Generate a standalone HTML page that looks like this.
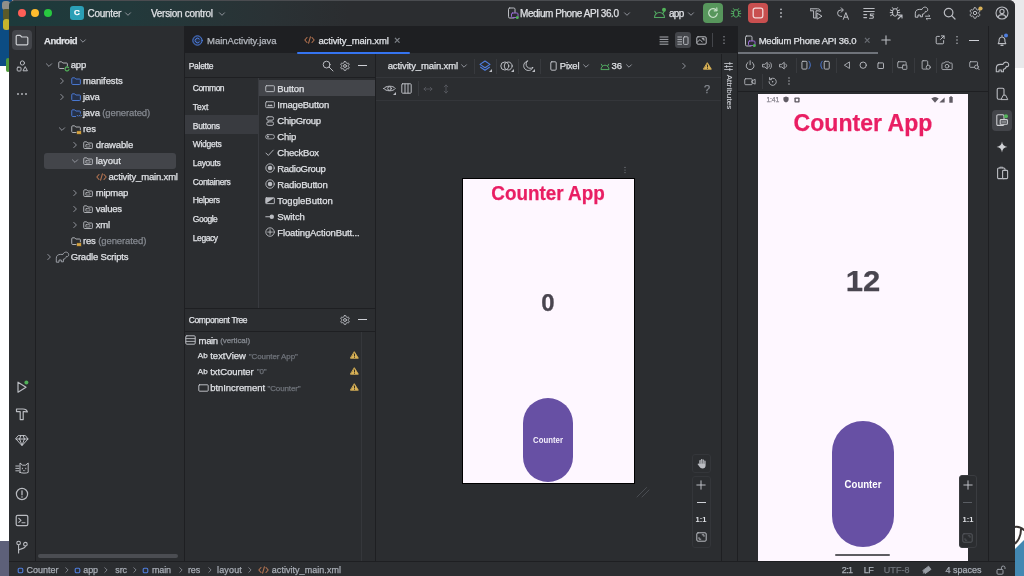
<!DOCTYPE html>
<html lang="en"><head><meta charset="utf-8"><title>Counter – activity_main.xml</title>
<style>
*{margin:0;padding:0;box-sizing:border-box}
html,body{width:1024px;height:576px;overflow:hidden;background:#fff}
body{position:relative;font-family:"Liberation Sans",sans-serif;font-size:9.5px;color:#dfe1e5}
#root{position:absolute;left:0;top:0;width:1024px;height:576px;will-change:transform}
.t{position:absolute;-webkit-text-stroke:0.25px;white-space:nowrap;line-height:16px;height:16px;display:block}
.r{position:absolute}
.i{position:absolute;overflow:visible;opacity:.88;fill:none;stroke:#ced0d6;stroke-width:1;stroke-linecap:round;stroke-linejoin:round}
#win{position:absolute;left:9px;top:0;width:1006px;height:576px;background:#2b2d30;border-radius:6px 6px 0 0;overflow:hidden}
</style></head>
<body>
<div id="root">
<div class="r" style="left:0px;top:0px;width:12px;height:66px;background:#0c4c83;"></div>
<div class="r" style="left:2px;top:1px;width:8px;height:9px;background:#8f8f8a;border-radius:3px"></div>
<div class="r" style="left:3px;top:9px;width:7px;height:11px;background:#5a5a2a;border-radius:2px"></div>
<div class="r" style="left:3px;top:19px;width:7px;height:11px;background:#c4b52e;border-radius:3px"></div>
<div class="r" style="left:6px;top:58px;width:4px;height:14px;background:#4f9a3a;border-radius:2px"></div>
<div class="r" style="left:0px;top:541px;width:12px;height:35px;background:#5d6079;"></div>
<div class="r" style="left:1012px;top:0px;width:12px;height:68px;background:#e9e9eb;"></div>
<svg class="i" style="left:1014px;top:520px" width="10" height="56" viewBox="0 0 10 56"><path d="M0 30 L10 20 V56 H0 Z" fill="#2a78a8" stroke="none"/><path d="M0 7 C4 6 7 7 10 10 M7 9 C7 16 4 22 0 24" stroke="#1f1a17" stroke-width="2"/></svg>
<div id="win"></div>
<div class="r" style="left:9px;top:0px;width:1006px;height:26px;background:linear-gradient(90deg,#1d3a3b 0px,#22393b 120px,#2a3235 260px,#2b2d30 340px);border-radius:6px 6px 0 0;border-top:1px solid #4a4c50"></div>
<div class="r" style="left:18px;top:9px;width:8px;height:8px;background:#fe5f57;border-radius:50%"></div>
<div class="r" style="left:31px;top:9px;width:8px;height:8px;background:#febc2e;border-radius:50%"></div>
<div class="r" style="left:44px;top:9px;width:8px;height:8px;background:#28c840;border-radius:50%"></div>
<div class="r" style="left:70px;top:6px;width:14px;height:14px;background:#2b9fb6;border-radius:3px"></div>
<span class="t" style="left:74px;top:5.35px;font-size:8px;color:#fff;font-weight:bold;">C</span>
<span class="t" style="left:87.6px;top:5.65px;font-size:10px;letter-spacing:-0.310px;">Counter</span>
<span class="t" style="left:151px;top:5.65px;font-size:10px;letter-spacing:-0.290px;">Version control</span>
<span class="t" style="left:520px;top:5.65px;font-size:10px;letter-spacing:-0.445px;">Medium Phone API 36.0</span>
<span class="t" style="left:669px;top:5.65px;font-size:10px;letter-spacing:-0.694px;">app</span>
<div class="r" style="left:703px;top:3px;width:20px;height:20px;background:#57965c;border-radius:4px"></div>
<div class="r" style="left:748px;top:3px;width:20px;height:20px;background:#c94f4f;border-radius:4px"></div>
<div class="r" style="left:185px;top:26px;width:553px;height:27px;background:#1e1f22;"></div>
<span class="t" style="left:207px;top:32.85px;color:#b4b8bf;letter-spacing:-0.032px;">MainActivity.java</span>
<span class="t" style="left:318.4px;top:32.85px;letter-spacing:-0.119px;">activity_main.xml</span>
<span class="t" style="left:394px;top:32.35px;font-size:11px;color:#868a91;">×</span>
<div class="r" style="left:297px;top:51.5px;width:112.5px;height:2.5px;background:#3574f0;border-radius:1.5px"></div>
<span class="t" style="left:758.7px;top:32.95px;letter-spacing:-0.231px;">Medium Phone API 36.0</span>
<span class="t" style="left:864px;top:32.35px;font-size:11px;color:#6f737a;">×</span>
<div class="r" style="left:738px;top:52px;width:140px;height:2px;background:#6f737a;"></div>
<div class="r" style="left:35px;top:26px;width:1px;height:535px;background:#1e1f22;"></div>
<div class="r" style="left:12px;top:30.2px;width:20px;height:19.8px;background:#43454a;border-radius:4px"></div>
<span class="t" style="left:44px;top:32.95px;font-weight:bold;letter-spacing:-0.458px;">Android</span>
<div class="r" style="left:44px;top:153.2px;width:132px;height:15.8px;background:#43454a;border-radius:3px"></div>
<span class="t" style="left:70.7px;top:57.30px;letter-spacing:-0.150px;">app</span>
<span class="t" style="left:82.9px;top:73.20px;letter-spacing:-0.095px;">manifests</span>
<span class="t" style="left:82.9px;top:89.20px;letter-spacing:-0.157px;">java</span>
<span class="t" style="left:82.9px;top:105.20px;letter-spacing:-0.130px;">java<span style="color:#868a91"> (generated)</span></span>
<span class="t" style="left:82.9px;top:121.20px;letter-spacing:-0.099px;">res</span>
<span class="t" style="left:95.8px;top:137.20px;letter-spacing:-0.156px;">drawable</span>
<span class="t" style="left:95.8px;top:153.20px;letter-spacing:-0.075px;">layout</span>
<span class="t" style="left:108.5px;top:169.20px;letter-spacing:-0.178px;">activity_main.xml</span>
<span class="t" style="left:95.8px;top:185.20px;letter-spacing:-0.264px;">mipmap</span>
<span class="t" style="left:95.8px;top:201.20px;letter-spacing:-0.260px;">values</span>
<span class="t" style="left:95.8px;top:217.20px;letter-spacing:-0.191px;">xml</span>
<span class="t" style="left:82.9px;top:233.20px;letter-spacing:-0.110px;">res<span style="color:#868a91"> (generated)</span></span>
<span class="t" style="left:70.7px;top:249.20px;letter-spacing:-0.185px;">Gradle Scripts</span>
<div class="r" style="left:184px;top:26px;width:1px;height:535px;background:#1e1f22;"></div>
<div class="r" style="left:38px;top:554px;width:140px;height:4px;background:#4b4d52;border-radius:2px"></div>
<span class="t" style="left:188.7px;top:57.85px;font-size:8.5px;letter-spacing:-0.280px;">Palette</span>
<div class="r" style="left:185px;top:77px;width:191px;height:1px;background:#1e1f22;"></div>
<div class="r" style="left:258px;top:78px;width:1px;height:230px;background:#393b40;"></div>
<div class="r" style="left:185px;top:115.4px;width:73px;height:18.2px;background:#393b40;"></div>
<span class="t" style="left:192.8px;top:80.15px;font-size:8.5px;letter-spacing:-0.547px;">Common</span>
<span class="t" style="left:192.8px;top:98.83px;font-size:8.5px;letter-spacing:0.028px;">Text</span>
<span class="t" style="left:192.8px;top:117.51px;font-size:8.5px;letter-spacing:-0.289px;">Buttons</span>
<span class="t" style="left:192.8px;top:136.19px;font-size:8.5px;letter-spacing:-0.301px;">Widgets</span>
<span class="t" style="left:192.8px;top:154.87px;font-size:8.5px;letter-spacing:-0.296px;">Layouts</span>
<span class="t" style="left:192.8px;top:173.55px;font-size:8.5px;letter-spacing:-0.350px;">Containers</span>
<span class="t" style="left:192.8px;top:192.23px;font-size:8.5px;letter-spacing:-0.355px;">Helpers</span>
<span class="t" style="left:192.8px;top:210.91px;font-size:8.5px;letter-spacing:-0.485px;">Google</span>
<span class="t" style="left:192.8px;top:229.59px;font-size:8.5px;letter-spacing:-0.435px;">Legacy</span>
<div class="r" style="left:259px;top:80px;width:116px;height:16px;background:#43454a;"></div>
<span class="t" style="left:277.3px;top:80.85px;letter-spacing:-0.094px;">Button</span>
<span class="t" style="left:277.3px;top:96.85px;letter-spacing:-0.197px;">ImageButton</span>
<span class="t" style="left:277.3px;top:112.85px;letter-spacing:-0.271px;">ChipGroup</span>
<span class="t" style="left:277.3px;top:128.85px;letter-spacing:-0.209px;">Chip</span>
<span class="t" style="left:277.3px;top:144.85px;letter-spacing:-0.225px;">CheckBox</span>
<span class="t" style="left:277.3px;top:160.85px;letter-spacing:-0.302px;">RadioGroup</span>
<span class="t" style="left:277.3px;top:176.85px;letter-spacing:-0.189px;">RadioButton</span>
<span class="t" style="left:277.3px;top:192.85px;letter-spacing:0.004px;">ToggleButton</span>
<span class="t" style="left:277.3px;top:208.85px;letter-spacing:-0.080px;">Switch</span>
<span class="t" style="left:277.3px;top:224.85px;letter-spacing:-0.129px;">FloatingActionButt...</span>
<div class="r" style="left:375px;top:54px;width:1px;height:507px;background:#1e1f22;"></div>
<div class="r" style="left:185px;top:307.5px;width:191px;height:1px;background:#1e1f22;"></div>
<span class="t" style="left:188.7px;top:311.95px;font-size:8.5px;letter-spacing:-0.344px;">Component Tree</span>
<div class="r" style="left:185px;top:331px;width:191px;height:1px;background:#1e1f22;"></div>
<div class="r" style="left:361px;top:332px;width:1px;height:229px;background:#35373b;"></div>
<span class="t" style="left:198.6px;top:332.55px;letter-spacing:-0.372px;">main</span>
<span class="t" style="left:220.2px;top:332.95px;font-size:8px;color:#868a91;letter-spacing:-0.087px;">(vertical)</span>
<span class="t" style="left:197.7px;top:348.15px;font-size:8px;letter-spacing:0.157px;">Ab</span>
<span class="t" style="left:210.25px;top:348.15px;letter-spacing:-0.016px;">textView</span>
<span class="t" style="left:248.7px;top:348.55px;font-size:8px;color:#6f737a;letter-spacing:-0.081px;">"Counter App"</span>
<span class="t" style="left:197.7px;top:364.05px;font-size:8px;letter-spacing:0.157px;">Ab</span>
<span class="t" style="left:210.25px;top:364.05px;letter-spacing:-0.032px;">txtCounter</span>
<span class="t" style="left:256.75px;top:364.45px;font-size:8px;color:#6f737a;letter-spacing:-0.126px;">"0"</span>
<span class="t" style="left:210.25px;top:380.35px;letter-spacing:-0.058px;">btnIncrement</span>
<span class="t" style="left:267.4px;top:380.75px;font-size:8px;color:#6f737a;letter-spacing:-0.104px;">"Counter"</span>
<span class="t" style="left:387.7px;top:58.35px;letter-spacing:-0.119px;">activity_main.xml</span>
<span class="t" style="left:559.8px;top:58.35px;letter-spacing:-0.218px;">Pixel</span>
<span class="t" style="left:611.5px;top:58.35px;letter-spacing:-0.033px;">36</span>
<span class="t" style="left:704px;top:81.35px;font-size:11px;color:#868a91;">?</span>
<div class="r" style="left:376px;top:77px;width:345px;height:1px;background:#34363a;"></div>
<div class="r" style="left:376px;top:100px;width:345px;height:1px;background:#34363a;"></div>
<div class="r" style="left:721px;top:54px;width:1px;height:507px;background:#1e1f22;"></div>
<div class="r" style="left:737px;top:26px;width:1px;height:535px;background:#1e1f22;"></div>
<span class="t" style="left:0px;top:-7.65px;font-size:8px;color:#ced0d6;letter-spacing:0.081px;left:721.2px;top:84.2px;transform:rotate(90deg);transform-origin:center;width:16px;text-align:center;overflow:visible;display:flex;justify-content:center;-webkit-text-stroke:0.1px;">Attributes</span>
<div class="r" style="left:461.5px;top:177.5px;width:173.5px;height:306px;background:#fef7ff;border:1px solid #000"></div>
<span class="t" style="left:548.1px;top:180.95px;font-size:19.6px;color:#e91e63;font-weight:bold;line-height:24px;height:24px;transform:translateX(-50%) scaleX(0.962);">Counter App</span>
<span class="t" style="left:548px;top:288.85px;font-size:24px;color:#49454f;font-weight:bold;line-height:28px;height:28px;transform:translateX(-50%);">0</span>
<div class="r" style="left:522.8px;top:397.8px;width:50.6px;height:84px;background:#6750a4;border-radius:25.3px"></div>
<span class="t" style="left:547.7px;top:433.35px;font-size:8.2px;color:#f3eefb;font-weight:bold;transform:translateX(-50%) scaleX(0.95);-webkit-text-stroke:0;">Counter</span>
<div class="r" style="left:691.5px;top:453.5px;width:19px;height:19px;background:#2b2d30;border:1px solid #34363a;border-radius:3px"></div>
<div class="r" style="left:691.5px;top:476px;width:19px;height:71.5px;background:#2b2d30;border:1px solid #34363a;border-radius:3px"></div>
<span class="t" style="left:701px;top:512.05px;font-size:7.5px;font-weight:bold;transform:translateX(-50%);-webkit-text-stroke:0;">1:1</span>
<div class="r" style="left:757.7px;top:93.5px;width:210.3px;height:467px;background:#fef7ff;"></div>
<span class="t" style="left:766.5px;top:92.15px;font-size:6.8px;color:#8a8690;letter-spacing:-0.158px;">1:41</span>
<span class="t" style="left:862.9px;top:108.15px;font-size:24.8px;color:#e91e63;font-weight:bold;line-height:30px;height:30px;transform:translateX(-50%) scaleX(0.93);">Counter App</span>
<span class="t" style="left:863.4px;top:263.75px;font-size:29px;color:#49454f;font-weight:bold;line-height:34px;height:34px;transform:translateX(-50%) scaleX(1.07);">12</span>
<div class="r" style="left:831.7px;top:420.8px;width:62.1px;height:126px;background:#6750a4;border-radius:31px"></div>
<span class="t" style="left:862.9px;top:477.35px;font-size:10px;color:#fff;font-weight:bold;transform:translateX(-50%) scaleX(0.96);-webkit-text-stroke:0;">Counter</span>
<div class="r" style="left:835.4px;top:553.5px;width:55px;height:2.5px;background:#5d5c61;border-radius:1.5px"></div>
<div class="r" style="left:958.5px;top:475px;width:18.5px;height:73px;background:#2b2d30;border:1px solid #3a3c40;border-radius:3px"></div>
<span class="t" style="left:968px;top:512.35px;font-size:7.5px;font-weight:bold;transform:translateX(-50%);-webkit-text-stroke:0;">1:1</span>
<div class="r" style="left:988px;top:26px;width:1px;height:535px;background:#1e1f22;"></div>
<div class="r" style="left:9px;top:561px;width:1006px;height:1px;background:#1e1f22;"></div>
<span class="t" style="left:26.4px;top:562.35px;font-size:9px;color:#a8adb5;letter-spacing:-0.002px;">Counter</span>
<span class="t" style="left:83.3px;top:562.35px;font-size:9px;color:#a8adb5;letter-spacing:-0.105px;">app</span>
<span class="t" style="left:115.3px;top:562.35px;font-size:9px;color:#a8adb5;letter-spacing:-0.099px;">src</span>
<span class="t" style="left:152px;top:562.35px;font-size:9px;color:#a8adb5;letter-spacing:-0.127px;">main</span>
<span class="t" style="left:188px;top:562.35px;font-size:9px;color:#a8adb5;letter-spacing:-0.167px;">res</span>
<span class="t" style="left:217px;top:562.35px;font-size:9px;color:#a8adb5;letter-spacing:0.164px;">layout</span>
<span class="t" style="left:271.8px;top:562.35px;font-size:9px;color:#a8adb5;letter-spacing:0.040px;">activity_main.xml</span>
<span class="t" style="left:841.8px;top:562.35px;font-size:9px;color:#a8adb5;letter-spacing:-0.603px;">2:1</span>
<span class="t" style="left:863.8px;top:562.35px;font-size:9px;color:#a8adb5;letter-spacing:-0.651px;">LF</span>
<span class="t" style="left:883.7px;top:562.35px;font-size:9px;color:#6f737a;letter-spacing:0.101px;">UTF-8</span>
<span class="t" style="left:945.4px;top:562.35px;font-size:9px;color:#a8adb5;letter-spacing:-0.002px;">4 spaces</span>
<svg class="i" style="left:124.00px;top:10.50px;" width="8.0" height="6.0" viewBox="0 0 8 6"><path d="M1.5 1.8 L4 4.3 L6.5 1.8" stroke="#9da0a8" stroke-width="1"/></svg>
<svg class="i" style="left:217.50px;top:10.50px;" width="8.0" height="6.0" viewBox="0 0 8 6"><path d="M1.5 1.8 L4 4.3 L6.5 1.8" stroke="#9da0a8" stroke-width="1"/></svg>
<svg class="i" style="left:623.00px;top:10.50px;" width="8.0" height="6.0" viewBox="0 0 8 6"><path d="M1.5 1.8 L4 4.3 L6.5 1.8" stroke="#9da0a8" stroke-width="1"/></svg>
<svg class="i" style="left:686.50px;top:10.50px;" width="8.0" height="6.0" viewBox="0 0 8 6"><path d="M1.5 1.8 L4 4.3 L6.5 1.8" stroke="#9da0a8" stroke-width="1"/></svg>
<svg class="i" style="left:507.00px;top:7.30px;" width="12.0" height="12.0" viewBox="0 0 12 12"><rect x="1.5" y="1" width="6.5" height="10" rx="1.2" stroke="#ced0d6"/><rect x="4.5" y="6" width="6.5" height="4.5" rx="1" fill="#2b2d30" stroke="#a571e6"/><circle cx="10.3" cy="10.6" r="1.5" fill="#57c55f" stroke="none"/></svg>
<svg class="i" style="left:653.00px;top:7.50px;" width="13.0" height="11.0" viewBox="0 0 13 11"><path d="M1.5 9.5 A5 5 0 0 1 11.5 9.5 Z M3.3 5.8 L1.8 3.3 M9.7 5.8 L11.2 3.3" stroke="#57b968" stroke-width="1.1"/><circle cx="11" cy="1.8" r="2" fill="#57c55f" stroke="none"/></svg>
<svg class="i" style="left:707.00px;top:7.00px;" width="12.0" height="12.0" viewBox="0 0 12 12"><path d="M9.6 3.6 A4.3 4.3 0 1 0 10.3 6.5" stroke="#d8ecd9" stroke-width="1.2"/><path d="M7.2 3.9 L10 3.6 L9.8 0.9" stroke="#d8ecd9" stroke-width="1.1"/></svg>
<svg class="i" style="left:729.50px;top:7.00px;" width="12.0" height="12.0" viewBox="0 0 12 12"><path d="M3.6 5.2 A2.4 2.6 0 0 1 8.4 5.2 V7.6 A2.4 2.6 0 0 1 3.6 7.6 Z M4.5 3 L3.4 1.6 M7.5 3 L8.6 1.6 M3.6 5 L1.4 4 M8.4 5 L10.6 4 M3.6 6.6 H1.2 M8.4 6.6 H10.8 M3.8 8.3 L1.6 9.6 M8.2 8.3 L10.4 9.6" stroke="#57b968" stroke-width="1"/></svg>
<svg class="i" style="left:752.20px;top:7.00px;" width="12.0" height="12.0" viewBox="0 0 12 12"><rect x="1.2" y="1.2" width="9.6" height="9.6" rx="2" stroke="#f7e9e9" stroke-width="1.3"/></svg>
<svg class="i" style="left:778.50px;top:7.00px;" width="4.0" height="12.0" viewBox="0 0 4 12"><g fill="#ced0d6" stroke="none"><circle cx="2" cy="2.3" r="0.9"/><circle cx="2" cy="6" r="0.9"/><circle cx="2" cy="9.7" r="0.9"/></g></svg>
<svg class="i" style="left:809.00px;top:6.50px;" width="14.0" height="13.0" viewBox="0 0 14 13"><path d="M1.5 1.8 H8.5 C10.5 1.8 11.5 3 11.8 4.3 L9 3.8 H7 V11 H4.6 V3.8 H1.5 Z" stroke="#ced0d6" stroke-width="1"/><path d="M8.3 6.3 L13 9.2 L8.3 12 Z" fill="#2b2d30" stroke="#ced0d6" stroke-width="1"/></svg>
<svg class="i" style="left:836.00px;top:6.50px;" width="14.0" height="13.0" viewBox="0 0 14 13"><path d="M6.5 3 H4.8 A3.2 3.2 0 1 0 4.8 9.4 H5.6" stroke="#ced0d6"/><path d="M5.2 0.8 L7.4 3 L5.2 5.2" stroke="#ced0d6"/><path d="M7.3 12.3 L9.9 5.6 L12.5 12.3 M8.2 10.2 H11.6" stroke="#ced0d6"/></svg>
<svg class="i" style="left:863.30px;top:6.50px;" width="12.0" height="12.0" viewBox="0 0 12 12"><path d="M0.8 1.5 H11.2 M0.8 4.5 H11.2 M0.8 7.6 H3.6 M0.8 10.6 H3.6" stroke="#ced0d6" stroke-width="1.1"/><path d="M10.8 7 H7.4 V8.6 H9.4 A1.4 1.4 0 0 1 9.4 11.3 H6.6" stroke="#ced0d6" stroke-width="1.1"/></svg>
<svg class="i" style="left:888.80px;top:6.30px;" width="12.0" height="12.0" viewBox="0 0 12 12"><path d="M3.6 5.2 A2.4 2.6 0 0 1 8.4 5.2 V7.6 A2.4 2.6 0 0 1 3.6 7.6 Z M4.5 3 L3.4 1.6 M7.5 3 L8.6 1.6 M3.6 5 L1.4 4 M8.4 5 L10.6 4 M3.6 6.6 H1.2 M8.4 6.6 H10.8 M3.8 8.3 L1.6 9.6 M8.2 8.3 L10.4 9.6" stroke="#ced0d6" stroke-width="1"/></svg>
<svg class="i" style="left:897.30px;top:14.00px;" width="6.0" height="6.0" viewBox="0 0 6 6"><path d="M1 5 L5 1 M2 1 H5 V4" stroke="#ced0d6" stroke-width="1.1"/></svg>
<svg class="i" style="left:914.00px;top:6.00px;" width="15.0" height="12.0" viewBox="0 0 15 12"><path d="M1.3 10.8 V7.2 C1.3 4.6 3.2 3.4 5.4 3.4 H8 C8.6 1.6 10.2 0.9 11.6 1.2 C13.2 1.6 14 3 13.6 4.4 C13.3 5.5 12.2 5.9 11.4 5.4 C10.8 7.6 9.4 8.2 8.4 8.2 V10.8 H6.3 V9 H4 V10.8 Z" stroke="#ced0d6" stroke-width="1"/></svg>
<svg class="i" style="left:924.50px;top:14.80px;" width="6.0" height="5.0" viewBox="0 0 6 5"><path d="M0.5 1.2 H5 L3.8 0.2 M5.5 3.6 H1 L2.2 4.6" stroke="#ced0d6" stroke-width="0.9"/></svg>
<svg class="i" style="left:943.00px;top:7.00px;" width="13.0" height="13.0" viewBox="0 0 13 13"><circle cx="5.6" cy="5.6" r="4.3" stroke="#ced0d6" stroke-width="1.2"/><path d="M8.696 8.696 L12 12" stroke="#ced0d6" stroke-width="1.2"/></svg>
<svg class="i" style="left:969.30px;top:7.30px;" width="12.0" height="12.0" viewBox="0 0 12 12"><path d="M6.00 0.70 L6.46 0.72 L6.91 0.85 L7.18 1.61 L7.33 2.36 L7.61 2.56 L7.90 2.71 L8.18 2.89 L8.49 3.03 L9.22 2.78 L10.00 2.64 L10.34 2.96 L10.59 3.35 L10.80 3.76 L10.91 4.21 L10.39 4.82 L9.82 5.33 L9.79 5.67 L9.80 6.00 L9.79 6.33 L9.82 6.67 L10.39 7.18 L10.91 7.79 L10.80 8.24 L10.59 8.65 L10.34 9.04 L10.00 9.36 L9.22 9.22 L8.49 8.97 L8.18 9.11 L7.90 9.29 L7.61 9.44 L7.33 9.64 L7.18 10.39 L6.91 11.15 L6.46 11.28 L6.00 11.30 L5.54 11.28 L5.09 11.15 L4.82 10.39 L4.67 9.64 L4.39 9.44 L4.10 9.29 L3.82 9.11 L3.51 8.97 L2.78 9.22 L2.00 9.36 L1.66 9.04 L1.41 8.65 L1.20 8.24 L1.09 7.79 L1.61 7.18 L2.18 6.67 L2.21 6.33 L2.20 6.00 L2.21 5.67 L2.18 5.33 L1.61 4.82 L1.09 4.21 L1.20 3.76 L1.41 3.35 L1.66 2.96 L2.00 2.64 L2.78 2.78 L3.51 3.03 L3.82 2.89 L4.10 2.71 L4.39 2.56 L4.67 2.36 L4.82 1.61 L5.09 0.85 L5.54 0.72 Z" stroke="#ced0d6" stroke-width="1"/><circle cx="6" cy="6" r="1.70" stroke="#ced0d6" stroke-width="1"/></svg>
<svg class="i" style="left:977.50px;top:6.10px;" width="5.0" height="5.0" viewBox="0 0 5 5"><circle cx="2.5" cy="2.5" r="2.1" fill="#f2c55c" stroke="none"/></svg>
<svg class="i" style="left:995.00px;top:6.00px;" width="14.0" height="14.0" viewBox="0 0 14 14"><circle cx="7" cy="7" r="6" stroke="#ced0d6" stroke-width="1.1"/><circle cx="7" cy="5.4" r="2.1" stroke="#ced0d6" stroke-width="1.1"/><path d="M3 11.3 C3.6 9.2 5.2 8.6 7 8.6 C8.8 8.6 10.4 9.2 11 11.3" stroke="#ced0d6" stroke-width="1.1"/></svg>
<svg class="i" style="left:192.30px;top:34.80px;" width="11.0" height="11.0" viewBox="0 0 11 11"><circle cx="5.5" cy="5.5" r="4.7" stroke="#548af7" fill="#25324d"/><path d="M7.3 4 A2.3 2.3 0 1 0 7.3 7" stroke="#548af7" stroke-width="1"/></svg>
<svg class="i" style="left:304.00px;top:36.30px;" width="11.0" height="8.0" viewBox="0 0 11 8"><path d="M3 1.5 L0.8 4 L3 6.5 M8 1.5 L10.2 4 L8 6.5 M6.4 0.8 L4.6 7.2" stroke="#c77d55" stroke-width="1.1"/></svg>
<svg class="i" style="left:658.80px;top:35.50px;" width="10.0" height="9.0" viewBox="0 0 10 9"><path d="M1 1 H9 M1 3.4 H9 M1 5.8 H9 M1 8.2 H9" stroke="#ced0d6" stroke-width="0.9"/></svg>
<div class="r" style="left:674.5px;top:32px;width:16px;height:16px;background:#43454a;border-radius:3px"></div>
<svg class="i" style="left:676.50px;top:35.50px;" width="12.0" height="9.0" viewBox="0 0 12 9"><path d="M0.8 1 H4.6 M0.8 3.4 H4.6 M0.8 5.8 H4.6 M0.8 8.2 H4.6" stroke="#ced0d6" stroke-width="0.9"/><rect x="6.6" y="0.8" width="4.4" height="7.6" rx="0.8" stroke="#ced0d6" stroke-width="0.9"/></svg>
<svg class="i" style="left:695.80px;top:35.50px;" width="11.0" height="9.0" viewBox="0 0 11 9"><rect x="0.8" y="0.8" width="9.4" height="7.4" rx="1.2" stroke="#ced0d6" stroke-width="1"/><path d="M1 6.4 L4 3.6 L6.2 6 M6.4 2.4 h1.6 v1.6 z" stroke="#ced0d6" stroke-width="0.9"/></svg>
<div class="r" style="left:712px;top:33px;width:1px;height:14px;background:#43454a;"></div>
<svg class="i" style="left:721.80px;top:34.00px;" width="4.0" height="12.0" viewBox="0 0 4 12"><g fill="#9da0a8" stroke="none"><circle cx="2" cy="2.7" r="0.75"/><circle cx="2" cy="6" r="0.75"/><circle cx="2" cy="9.3" r="0.75"/></g></svg>
<svg class="i" style="left:744.00px;top:34.50px;" width="12.0" height="12.0" viewBox="0 0 12 12"><rect x="1.5" y="1" width="6.5" height="10" rx="1.2" stroke="#ced0d6"/><rect x="4.5" y="6" width="6.5" height="4.5" rx="1" fill="#2b2d30" stroke="#a571e6"/><circle cx="10.3" cy="10.6" r="1.5" fill="#57c55f" stroke="none"/></svg>
<svg class="i" style="left:881.00px;top:35.00px;" width="10.0" height="10.0" viewBox="0 0 10 10"><path d="M5 0.8 V9.2 M0.8 5 H9.2" stroke="#ced0d6" stroke-width="1.1"/></svg>
<svg class="i" style="left:934.60px;top:35.00px;" width="10.0" height="10.0" viewBox="0 0 10 10"><path d="M4.4 1.4 H2.2 A1 1 0 0 0 1.2 2.4 V7.8 A1 1 0 0 0 2.2 8.8 H7.6 A1 1 0 0 0 8.6 7.8 V5.6 M5.6 4.4 L9 1 M6.4 0.9 H9.1 V3.6" stroke="#ced0d6" stroke-width="1"/></svg>
<svg class="i" style="left:954.80px;top:34.00px;" width="4.0" height="12.0" viewBox="0 0 4 12"><g fill="#ced0d6" stroke="none"><circle cx="2" cy="2.7" r="0.75"/><circle cx="2" cy="6" r="0.75"/><circle cx="2" cy="9.3" r="0.75"/></g></svg>
<div class="r" style="left:969px;top:39.6px;width:10px;height:1.1px;background:#ced0d6;"></div>
<svg class="i" style="left:15.00px;top:34.00px;" width="14.0" height="12.0" viewBox="0 0 14 12"><path d="M1.2 2.3 A1 1 0 0 1 2.2 1.3 H5.2 L6.8 3 H11.8 A1 1 0 0 1 12.8 4 V9.8 A1 1 0 0 1 11.8 10.8 H2.2 A1 1 0 0 1 1.2 9.8 Z" stroke="#dfe1e5" stroke-width="1.2"/></svg>
<svg class="i" style="left:15.00px;top:59.00px;" width="14.0" height="14.0" viewBox="0 0 14 14"><circle cx="7.4" cy="4" r="2.1" stroke="#ced0d6" stroke-width="1"/><rect x="2.2" y="8.2" width="3.8" height="3.8" rx="0.8" stroke="#ced0d6" stroke-width="1"/><path d="M10.4 8 L12.4 11.8 H8.4 Z" stroke="#ced0d6" stroke-width="1"/></svg>
<svg class="i" style="left:16.00px;top:92.00px;" width="12.0" height="4.0" viewBox="0 0 12 4"><g fill="#ced0d6" stroke="none"><circle cx="2" cy="2" r="0.95"/><circle cx="6" cy="2" r="0.95"/><circle cx="10" cy="2" r="0.95"/></g></svg>
<svg class="i" style="left:15.00px;top:379.80px;" width="14.0" height="14.0" viewBox="0 0 14 14"><path d="M3 2.2 L11 7.2 L3 12.2 Z" stroke="#ced0d6" stroke-width="1.2"/><circle cx="11.4" cy="2.6" r="2" fill="#57c55f" stroke="none"/></svg>
<svg class="i" style="left:15.00px;top:406.60px;" width="14.0" height="14.0" viewBox="0 0 14 14"><path d="M1.5 2 H8 C10.5 2 12 3.4 12.4 5 L9.4 4.6 H8.2 V12.6 H5.2 V4.6 H1.5 Z" stroke="#ced0d6" stroke-width="1.2"/></svg>
<svg class="i" style="left:15.00px;top:434.00px;" width="14.0" height="13.0" viewBox="0 0 14 13"><path d="M3.6 1.6 H10.4 L13 5 L7 11.6 L1 5 Z M1 5 H13 M4.6 5 L7 11.4 L9.4 5 M4.6 5 L5.8 1.6 M9.4 5 L8.2 1.6" stroke="#ced0d6" stroke-width="1"/></svg>
<svg class="i" style="left:14.50px;top:460.80px;" width="15.0" height="13.0" viewBox="0 0 15 13"><path d="M5 11.4 V2 L7.6 4.2 H10.6 L13.2 2 V11.4 C11.8 12.4 6.4 12.4 5 11.4 Z M7.4 7.2 V7.8 M10.8 7.2 V7.8 M8.6 9.6 L9.1 10.1 L9.6 9.6 M0.8 5 H4 M0.8 7.4 H4 M0.8 9.8 H4" stroke="#ced0d6" stroke-width="1"/></svg>
<svg class="i" style="left:15.00px;top:487.00px;" width="14.0" height="14.0" viewBox="0 0 14 14"><circle cx="7" cy="7" r="5.6" stroke="#ced0d6" stroke-width="1.2"/><path d="M7 3.8 V7.8" stroke="#ced0d6" stroke-width="1.3"/><circle cx="7" cy="10" r="0.8" fill="#ced0d6" stroke="none"/></svg>
<svg class="i" style="left:15.00px;top:513.80px;" width="14.0" height="13.0" viewBox="0 0 14 13"><rect x="1.2" y="1.4" width="11.6" height="10.2" rx="1.4" stroke="#ced0d6" stroke-width="1.2"/><path d="M3.8 4.4 L6 6.4 L3.8 8.4 M7 8.8 H10" stroke="#ced0d6" stroke-width="1.1"/></svg>
<svg class="i" style="left:14.50px;top:539.70px;" width="14.0" height="14.0" viewBox="0 0 14 14"><circle cx="3.6" cy="3" r="1.8" stroke="#ced0d6" stroke-width="1.1"/><circle cx="10.4" cy="4.2" r="1.8" stroke="#ced0d6" stroke-width="1.1"/><path d="M3.6 4.8 V13 M3.6 10.6 C3.6 8.4 10.4 9.4 10.4 6" stroke="#ced0d6" stroke-width="1.1"/></svg>
<svg class="i" style="left:995.00px;top:33.00px;" width="14.0" height="14.0" viewBox="0 0 14 14"><path d="M3.2 10.6 C4.2 9.6 4.2 8.4 4.2 6.2 A2.9 2.9 0 0 1 9.8 6.2 C9.8 8.4 9.8 9.6 10.8 10.6 Z M6 12.4 H8 M7 2.4 V3.2" stroke="#ced0d6" stroke-width="1.1"/><circle cx="11" cy="2.6" r="2" fill="#548af7" stroke="none"/></svg>
<svg class="i" style="left:994.50px;top:61.00px;" width="15.0" height="12.0" viewBox="0 0 15 12"><path d="M1.3 10.8 V7.2 C1.3 4.6 3.2 3.4 5.4 3.4 H8 C8.6 1.6 10.2 0.9 11.6 1.2 C13.2 1.6 14 3 13.6 4.4 C13.3 5.5 12.2 5.9 11.4 5.4 C10.8 7.6 9.4 8.2 8.4 8.2 V10.8 H6.3 V9 H4 V10.8 Z" stroke="#ced0d6" stroke-width="1.1"/></svg>
<svg class="i" style="left:995.00px;top:86.60px;" width="14.0" height="14.0" viewBox="0 0 14 14"><rect x="2.2" y="1.2" width="6.8" height="11" rx="1.4" stroke="#ced0d6" stroke-width="1.1"/><path d="M8.6 8.2 H10.6 L12.8 12.6 H6.4 Z" fill="#2b2d30" stroke="#ced0d6" stroke-width="1"/></svg>
<div class="r" style="left:992.3px;top:110px;width:20px;height:20.5px;background:#43454a;border-radius:4px"></div>
<svg class="i" style="left:995.00px;top:113.30px;" width="14.0" height="14.0" viewBox="0 0 14 14"><rect x="1.8" y="1.8" width="7.2" height="10.6" rx="1.2" stroke="#dfe1e5" stroke-width="1.1"/><rect x="5.2" y="6.6" width="7.2" height="4.6" rx="0.8" fill="#43454a" stroke="#dfe1e5" stroke-width="1.1"/><path d="M6.8 9 H10.8" stroke="#dfe1e5" stroke-width="0.9"/><circle cx="11" cy="3.2" r="2" fill="#57c55f" stroke="none"/></svg>
<svg class="i" style="left:996.00px;top:140.60px;" width="12.0" height="12.0" viewBox="0 0 12 12"><path d="M6 0.6 C6.5 4 8 5.5 11.4 6 C8 6.5 6.5 8 6 11.4 C5.5 8 4 6.5 0.6 6 C4 5.5 5.5 4 6 0.6 Z" fill="#e6e8ec" stroke="none"/></svg>
<svg class="i" style="left:995.50px;top:165.50px;" width="13.0" height="14.0" viewBox="0 0 13 14"><rect x="1.6" y="2" width="7.4" height="10.6" rx="1.2" stroke="#ced0d6" stroke-width="1.1"/><rect x="6.6" y="4.4" width="5" height="8.2" rx="0.9" fill="#2b2d30" stroke="#ced0d6" stroke-width="1.1"/><path d="M3.8 2 V1.2 H6.8 V2" stroke="#ced0d6" stroke-width="0.9"/></svg>
<svg class="i" style="left:45.00px;top:62.30px;" width="8.0" height="6.0" viewBox="0 0 8 6"><path d="M1.4 1.8 L4 4.4 L6.6 1.8" stroke="#9da0a8" stroke-width="1"/></svg>
<svg class="i" style="left:58.24px;top:60.66px;" width="10.12" height="8.28" viewBox="0 0 11 9"><path d="M0.8 1.8 A0.9 0.9 0 0 1 1.7 0.9 H4 L5.2 2.2 H9.3 A0.9 0.9 0 0 1 10.2 3.1 V7.3 A0.9 0.9 0 0 1 9.3 8.2 H1.7 A0.9 0.9 0 0 1 0.8 7.3 Z" stroke="#ced0d6" stroke-width="1"/></svg>
<svg class="i" style="left:64.00px;top:65.50px;" width="6.0" height="6.0" viewBox="0 0 6 6"><rect x="0" y="0" width="6" height="6" fill="#2b2d30" stroke="none"/><path d="M4.6 1.6 A2 2 0 1 0 5 3.4" stroke="#57c55f" stroke-width="1.1"/></svg>
<svg class="i" style="left:58.80px;top:77.20px;" width="6.0" height="8.0" viewBox="0 0 6 8"><path d="M1.8 1.4 L4.4 4 L1.8 6.6" stroke="#9da0a8" stroke-width="1"/></svg>
<svg class="i" style="left:70.94px;top:76.86px;" width="10.12" height="8.28" viewBox="0 0 11 9"><path d="M0.8 1.8 A0.9 0.9 0 0 1 1.7 0.9 H4 L5.2 2.2 H9.3 A0.9 0.9 0 0 1 10.2 3.1 V7.3 A0.9 0.9 0 0 1 9.3 8.2 H1.7 A0.9 0.9 0 0 1 0.8 7.3 Z" stroke="#548af7" fill="#25324d" stroke-width="1"/></svg>
<svg class="i" style="left:58.80px;top:93.20px;" width="6.0" height="8.0" viewBox="0 0 6 8"><path d="M1.8 1.4 L4.4 4 L1.8 6.6" stroke="#9da0a8" stroke-width="1"/></svg>
<svg class="i" style="left:70.94px;top:92.86px;" width="10.12" height="8.28" viewBox="0 0 11 9"><path d="M0.8 1.8 A0.9 0.9 0 0 1 1.7 0.9 H4 L5.2 2.2 H9.3 A0.9 0.9 0 0 1 10.2 3.1 V7.3 A0.9 0.9 0 0 1 9.3 8.2 H1.7 A0.9 0.9 0 0 1 0.8 7.3 Z" stroke="#548af7" fill="#25324d" stroke-width="1"/></svg>
<svg class="i" style="left:70.94px;top:108.86px;" width="10.12" height="8.28" viewBox="0 0 11 9"><path d="M0.8 1.8 A0.9 0.9 0 0 1 1.7 0.9 H4 L5.2 2.2 H9.3 A0.9 0.9 0 0 1 10.2 3.1 V7.3 A0.9 0.9 0 0 1 9.3 8.2 H1.7 A0.9 0.9 0 0 1 0.8 7.3 Z" stroke="#548af7" fill="#25324d" stroke-width="1"/></svg>
<svg class="i" style="left:75.50px;top:113.00px;" width="6.0" height="5.0" viewBox="0 0 6 5"><rect x="0" y="0.6" width="6" height="4.4" fill="#2b2d30" stroke="none"/><path d="M1 2.2 L1.8 3 M3 2.2 L3.8 3 M5 2.2 L5.4 2.6" stroke="#548af7" stroke-width="1"/></svg>
<svg class="i" style="left:57.60px;top:126.30px;" width="8.0" height="6.0" viewBox="0 0 8 6"><path d="M1.4 1.8 L4 4.4 L6.6 1.8" stroke="#9da0a8" stroke-width="1"/></svg>
<svg class="i" style="left:70.94px;top:124.66px;" width="10.12" height="8.28" viewBox="0 0 11 9"><path d="M0.8 1.8 A0.9 0.9 0 0 1 1.7 0.9 H4 L5.2 2.2 H9.3 A0.9 0.9 0 0 1 10.2 3.1 V7.3 A0.9 0.9 0 0 1 9.3 8.2 H1.7 A0.9 0.9 0 0 1 0.8 7.3 Z" stroke="#ced0d6" stroke-width="1"/></svg>
<svg class="i" style="left:76.00px;top:129.50px;" width="6.0" height="5.0" viewBox="0 0 6 5"><rect x="0.6" y="0.6" width="5" height="4" fill="#e0a83a" stroke="#2b2d30" stroke-width="0.8"/></svg>
<svg class="i" style="left:71.60px;top:141.20px;" width="6.0" height="8.0" viewBox="0 0 6 8"><path d="M1.8 1.4 L4.4 4 L1.8 6.6" stroke="#9da0a8" stroke-width="1"/></svg>
<svg class="i" style="left:83.04px;top:140.86px;" width="10.12" height="8.28" viewBox="0 0 11 9"><path d="M0.8 1.8 A0.9 0.9 0 0 1 1.7 0.9 H4 L5.2 2.2 H9.3 A0.9 0.9 0 0 1 10.2 3.1 V7.3 A0.9 0.9 0 0 1 9.3 8.2 H1.7 A0.9 0.9 0 0 1 0.8 7.3 Z" stroke="#ced0d6" stroke-width="1"/><rect x="3" y="4" width="4.6" height="2.6" rx="0.5" stroke="#ced0d6" stroke-width="0.8"/></svg>
<svg class="i" style="left:70.60px;top:158.30px;" width="8.0" height="6.0" viewBox="0 0 8 6"><path d="M1.4 1.8 L4 4.4 L6.6 1.8" stroke="#9da0a8" stroke-width="1"/></svg>
<svg class="i" style="left:83.04px;top:156.86px;" width="10.12" height="8.28" viewBox="0 0 11 9"><path d="M0.8 1.8 A0.9 0.9 0 0 1 1.7 0.9 H4 L5.2 2.2 H9.3 A0.9 0.9 0 0 1 10.2 3.1 V7.3 A0.9 0.9 0 0 1 9.3 8.2 H1.7 A0.9 0.9 0 0 1 0.8 7.3 Z" stroke="#ced0d6" stroke-width="1"/><rect x="3" y="4" width="4.6" height="2.6" rx="0.5" stroke="#ced0d6" stroke-width="0.8"/></svg>
<svg class="i" style="left:95.50px;top:173.30px;" width="11.0" height="8.0" viewBox="0 0 11 8"><path d="M3 1.5 L0.8 4 L3 6.5 M8 1.5 L10.2 4 L8 6.5 M6.4 0.8 L4.6 7.2" stroke="#c77d55" stroke-width="1.1"/></svg>
<svg class="i" style="left:71.60px;top:189.20px;" width="6.0" height="8.0" viewBox="0 0 6 8"><path d="M1.8 1.4 L4.4 4 L1.8 6.6" stroke="#9da0a8" stroke-width="1"/></svg>
<svg class="i" style="left:83.04px;top:188.86px;" width="10.12" height="8.28" viewBox="0 0 11 9"><path d="M0.8 1.8 A0.9 0.9 0 0 1 1.7 0.9 H4 L5.2 2.2 H9.3 A0.9 0.9 0 0 1 10.2 3.1 V7.3 A0.9 0.9 0 0 1 9.3 8.2 H1.7 A0.9 0.9 0 0 1 0.8 7.3 Z" stroke="#ced0d6" stroke-width="1"/><rect x="3" y="4" width="4.6" height="2.6" rx="0.5" stroke="#ced0d6" stroke-width="0.8"/></svg>
<svg class="i" style="left:71.60px;top:205.20px;" width="6.0" height="8.0" viewBox="0 0 6 8"><path d="M1.8 1.4 L4.4 4 L1.8 6.6" stroke="#9da0a8" stroke-width="1"/></svg>
<svg class="i" style="left:83.04px;top:204.86px;" width="10.12" height="8.28" viewBox="0 0 11 9"><path d="M0.8 1.8 A0.9 0.9 0 0 1 1.7 0.9 H4 L5.2 2.2 H9.3 A0.9 0.9 0 0 1 10.2 3.1 V7.3 A0.9 0.9 0 0 1 9.3 8.2 H1.7 A0.9 0.9 0 0 1 0.8 7.3 Z" stroke="#ced0d6" stroke-width="1"/><rect x="3" y="4" width="4.6" height="2.6" rx="0.5" stroke="#ced0d6" stroke-width="0.8"/></svg>
<svg class="i" style="left:71.60px;top:221.20px;" width="6.0" height="8.0" viewBox="0 0 6 8"><path d="M1.8 1.4 L4.4 4 L1.8 6.6" stroke="#9da0a8" stroke-width="1"/></svg>
<svg class="i" style="left:83.04px;top:220.86px;" width="10.12" height="8.28" viewBox="0 0 11 9"><path d="M0.8 1.8 A0.9 0.9 0 0 1 1.7 0.9 H4 L5.2 2.2 H9.3 A0.9 0.9 0 0 1 10.2 3.1 V7.3 A0.9 0.9 0 0 1 9.3 8.2 H1.7 A0.9 0.9 0 0 1 0.8 7.3 Z" stroke="#ced0d6" stroke-width="1"/><rect x="3" y="4" width="4.6" height="2.6" rx="0.5" stroke="#ced0d6" stroke-width="0.8"/></svg>
<svg class="i" style="left:70.94px;top:236.66px;" width="10.12" height="8.28" viewBox="0 0 11 9"><path d="M0.8 1.8 A0.9 0.9 0 0 1 1.7 0.9 H4 L5.2 2.2 H9.3 A0.9 0.9 0 0 1 10.2 3.1 V7.3 A0.9 0.9 0 0 1 9.3 8.2 H1.7 A0.9 0.9 0 0 1 0.8 7.3 Z" stroke="#ced0d6" stroke-width="1"/></svg>
<svg class="i" style="left:76.00px;top:241.50px;" width="6.0" height="5.0" viewBox="0 0 6 5"><rect x="0.6" y="0.6" width="5" height="4" fill="#e0a83a" stroke="#2b2d30" stroke-width="0.8"/></svg>
<svg class="i" style="left:46.00px;top:253.20px;" width="6.0" height="8.0" viewBox="0 0 6 8"><path d="M1.8 1.4 L4.4 4 L1.8 6.6" stroke="#9da0a8" stroke-width="1"/></svg>
<svg class="i" style="left:55.00px;top:251.00px;" width="15.0" height="12.0" viewBox="0 0 15 12"><path d="M1.3 10.8 V7.2 C1.3 4.6 3.2 3.4 5.4 3.4 H8 C8.6 1.6 10.2 0.9 11.6 1.2 C13.2 1.6 14 3 13.6 4.4 C13.3 5.5 12.2 5.9 11.4 5.4 C10.8 7.6 9.4 8.2 8.4 8.2 V10.8 H6.3 V9 H4 V10.8 Z" stroke="#b4b8bf" stroke-width="0.9"/></svg>
<svg class="i" style="left:78.50px;top:38.00px;" width="8.0" height="6.0" viewBox="0 0 8 6"><path d="M1.6 1.8 L4 4.2 L6.4 1.8" stroke="#9da0a8" stroke-width="1"/></svg>
<svg class="i" style="left:320.70px;top:59.30px;" width="13.0" height="13.0" viewBox="0 0 13 13"><circle cx="5.6" cy="5.6" r="3.4" stroke="#ced0d6" stroke-width="1"/><path d="M8.048 8.048 L12 12" stroke="#ced0d6" stroke-width="1"/></svg>
<svg class="i" style="left:338.60px;top:59.50px;" width="12.0" height="12.0" viewBox="0 0 12 12"><path d="M6.00 1.50 L6.39 1.51 L6.77 1.63 L7.00 2.26 L7.13 2.90 L7.37 3.07 L7.62 3.20 L7.85 3.35 L8.12 3.48 L8.73 3.27 L9.40 3.15 L9.69 3.42 L9.90 3.75 L10.08 4.10 L10.17 4.48 L9.74 5.00 L9.24 5.43 L9.22 5.72 L9.23 6.00 L9.22 6.28 L9.24 6.57 L9.74 7.00 L10.17 7.52 L10.08 7.90 L9.90 8.25 L9.69 8.58 L9.40 8.85 L8.73 8.73 L8.12 8.52 L7.85 8.65 L7.62 8.80 L7.37 8.93 L7.13 9.10 L7.00 9.74 L6.77 10.37 L6.39 10.49 L6.00 10.50 L5.61 10.49 L5.23 10.37 L5.00 9.74 L4.87 9.10 L4.63 8.93 L4.38 8.80 L4.15 8.65 L3.88 8.52 L3.27 8.73 L2.60 8.85 L2.31 8.58 L2.10 8.25 L1.92 7.90 L1.83 7.52 L2.26 7.00 L2.76 6.57 L2.78 6.28 L2.77 6.00 L2.78 5.72 L2.76 5.43 L2.26 5.00 L1.83 4.48 L1.92 4.10 L2.10 3.75 L2.31 3.42 L2.60 3.15 L3.27 3.27 L3.88 3.48 L4.15 3.35 L4.39 3.20 L4.63 3.07 L4.87 2.90 L5.00 2.26 L5.23 1.63 L5.61 1.51 Z" stroke="#ced0d6" stroke-width="1"/><circle cx="6" cy="6" r="1.44" stroke="#ced0d6" stroke-width="1"/></svg>
<div class="r" style="left:357.5px;top:65px;width:9px;height:1px;background:#ced0d6;"></div>
<svg class="i" style="left:338.60px;top:313.60px;" width="12.0" height="12.0" viewBox="0 0 12 12"><path d="M6.00 1.50 L6.39 1.51 L6.77 1.63 L7.00 2.26 L7.13 2.90 L7.37 3.07 L7.62 3.20 L7.85 3.35 L8.12 3.48 L8.73 3.27 L9.40 3.15 L9.69 3.42 L9.90 3.75 L10.08 4.10 L10.17 4.48 L9.74 5.00 L9.24 5.43 L9.22 5.72 L9.23 6.00 L9.22 6.28 L9.24 6.57 L9.74 7.00 L10.17 7.52 L10.08 7.90 L9.90 8.25 L9.69 8.58 L9.40 8.85 L8.73 8.73 L8.12 8.52 L7.85 8.65 L7.62 8.80 L7.37 8.93 L7.13 9.10 L7.00 9.74 L6.77 10.37 L6.39 10.49 L6.00 10.50 L5.61 10.49 L5.23 10.37 L5.00 9.74 L4.87 9.10 L4.63 8.93 L4.38 8.80 L4.15 8.65 L3.88 8.52 L3.27 8.73 L2.60 8.85 L2.31 8.58 L2.10 8.25 L1.92 7.90 L1.83 7.52 L2.26 7.00 L2.76 6.57 L2.78 6.28 L2.77 6.00 L2.78 5.72 L2.76 5.43 L2.26 5.00 L1.83 4.48 L1.92 4.10 L2.10 3.75 L2.31 3.42 L2.60 3.15 L3.27 3.27 L3.88 3.48 L4.15 3.35 L4.39 3.20 L4.63 3.07 L4.87 2.90 L5.00 2.26 L5.23 1.63 L5.61 1.51 Z" stroke="#ced0d6" stroke-width="1"/><circle cx="6" cy="6" r="1.44" stroke="#ced0d6" stroke-width="1"/></svg>
<div class="r" style="left:357.5px;top:319.2px;width:9px;height:1px;background:#ced0d6;"></div>
<svg class="i" style="left:264.74px;top:84.82px;" width="10.12" height="7.36" viewBox="0 0 11 8"><rect x="0.8" y="0.8" width="9.4" height="6.4" rx="0.8" stroke="#ced0d6" stroke-width="1"/></svg>
<svg class="i" style="left:264.74px;top:100.82px;" width="10.12" height="7.36" viewBox="0 0 11 8"><rect x="0.8" y="0.8" width="9.4" height="6.4" rx="0.8" stroke="#ced0d6" stroke-width="1"/><path d="M2.4 5.6 C3.4 3.4 4.4 3.4 5.4 4.6 C6.2 3.2 7.6 3.6 8.6 5.6 Z" fill="#ced0d6" stroke="none"/></svg>
<svg class="i" style="left:265.66px;top:115.54px;" width="8.28" height="10.12" viewBox="0 0 9 11"><rect x="0.8" y="0.8" width="7.4" height="3.8" rx="1.6" stroke="#ced0d6" stroke-width="1"/><rect x="0.8" y="6.4" width="7.4" height="3.8" rx="1.6" stroke="#ced0d6" stroke-width="1"/></svg>
<svg class="i" style="left:264.74px;top:133.74px;" width="10.12" height="5.52" viewBox="0 0 11 6"><rect x="0.7" y="0.7" width="9.6" height="4.6" rx="2.3" stroke="#ced0d6" stroke-width="0.9"/><circle cx="3.2" cy="3" r="1" fill="#ced0d6" stroke="none"/></svg>
<svg class="i" style="left:265.20px;top:148.62px;" width="9.2" height="7.36" viewBox="0 0 10 8"><path d="M1 4.4 L3.6 7 L9 1.2" stroke="#ced0d6" stroke-width="1"/></svg>
<svg class="i" style="left:264.74px;top:163.44px;" width="10.12" height="10.12" viewBox="0 0 11 11"><circle cx="5.5" cy="5.5" r="4.6" stroke="#ced0d6" stroke-width="1"/><circle cx="5.5" cy="5.5" r="2.5" fill="#ced0d6" stroke="none"/></svg>
<svg class="i" style="left:264.74px;top:179.44px;" width="10.12" height="10.12" viewBox="0 0 11 11"><circle cx="5.5" cy="5.5" r="4.6" stroke="#ced0d6" stroke-width="1"/><circle cx="5.5" cy="5.5" r="2.5" fill="#ced0d6" stroke="none"/></svg>
<svg class="i" style="left:264.74px;top:196.82px;" width="10.12" height="7.36" viewBox="0 0 11 8"><rect x="0.8" y="0.8" width="9.4" height="6.4" rx="0.6" stroke="#ced0d6" stroke-width="1"/><path d="M1 1 H10 L1 7 Z" fill="#ced0d6" stroke="none"/></svg>
<svg class="i" style="left:264.74px;top:213.74px;" width="10.12" height="5.52" viewBox="0 0 11 6"><path d="M0.8 3 H5" stroke="#ced0d6" stroke-width="1.1"/><circle cx="7.4" cy="3" r="2.4" fill="#ced0d6" stroke="none"/></svg>
<svg class="i" style="left:264.74px;top:227.44px;" width="10.12" height="10.12" viewBox="0 0 11 11"><circle cx="5.5" cy="5.5" r="4.6" stroke="#ced0d6" stroke-width="1"/><path d="M5.5 3 V8 M3 5.5 H8" stroke="#ced0d6" stroke-width="1"/></svg>
<svg class="i" style="left:185.10px;top:335.00px;" width="11.0" height="10.0" viewBox="0 0 11 10"><rect x="0.8" y="0.8" width="9.4" height="8.4" rx="1" stroke="#ced0d6" stroke-width="1"/><path d="M1 3.6 H10 M1 6.4 H10" stroke="#ced0d6" stroke-width="0.9"/></svg>
<svg class="i" style="left:197.50px;top:383.50px;" width="11.0" height="8.0" viewBox="0 0 11 8"><rect x="0.8" y="0.8" width="9.4" height="6.4" rx="0.8" stroke="#ced0d6" stroke-width="1"/></svg>
<svg class="i" style="left:350.10px;top:351.30px;" width="9.0" height="8.0" viewBox="0 0 9 8"><path d="M4.5 1 L8.3 7.2 H0.7 Z" fill="#f2c55c" stroke="#f2c55c" stroke-width="0.9"/><path d="M4.5 3 V5" stroke="#3a3220" stroke-width="1"/><circle cx="4.5" cy="6.3" r="0.55" fill="#3a3220" stroke="none"/></svg>
<svg class="i" style="left:350.10px;top:367.20px;" width="9.0" height="8.0" viewBox="0 0 9 8"><path d="M4.5 1 L8.3 7.2 H0.7 Z" fill="#f2c55c" stroke="#f2c55c" stroke-width="0.9"/><path d="M4.5 3 V5" stroke="#3a3220" stroke-width="1"/><circle cx="4.5" cy="6.3" r="0.55" fill="#3a3220" stroke="none"/></svg>
<svg class="i" style="left:350.10px;top:383.00px;" width="9.0" height="8.0" viewBox="0 0 9 8"><path d="M4.5 1 L8.3 7.2 H0.7 Z" fill="#f2c55c" stroke="#f2c55c" stroke-width="0.9"/><path d="M4.5 3 V5" stroke="#3a3220" stroke-width="1"/><circle cx="4.5" cy="6.3" r="0.55" fill="#3a3220" stroke="none"/></svg>
<svg class="i" style="left:460.30px;top:63.30px;" width="8.0" height="6.0" viewBox="0 0 8 6"><path d="M1.6 1.8 L4 4.2 L6.4 1.8" stroke="#9da0a8" stroke-width="1"/></svg>
<div class="r" style="left:473.5px;top:59px;width:1px;height:15px;background:#383a3e;"></div>
<svg class="i" style="left:479.00px;top:59.50px;" width="12.0" height="12.0" viewBox="0 0 12 12"><path d="M6 1 L11 4.4 L6 7.8 L1 4.4 Z" stroke="#548af7" stroke-width="1.1"/><path d="M1.6 7.2 L6 10.2 L10.4 7.2" stroke="#548af7" stroke-width="1.1"/></svg>
<svg class="i" style="left:488.70px;top:69.10px;" width="3.0" height="3.0" viewBox="0 0 3 3"><path d="M3 0 V3 H0 Z" fill="#ced0d6" stroke="none"/></svg>
<div class="r" style="left:495.5px;top:59px;width:1px;height:15px;background:#383a3e;"></div>
<svg class="i" style="left:499.80px;top:59.50px;" width="13.0" height="12.0" viewBox="0 0 13 12"><circle cx="4.8" cy="6" r="4" stroke="#ced0d6" stroke-width="1"/><circle cx="8.2" cy="6" r="4" stroke="#ced0d6" stroke-width="1"/></svg>
<svg class="i" style="left:510.70px;top:69.10px;" width="3.0" height="3.0" viewBox="0 0 3 3"><path d="M3 0 V3 H0 Z" fill="#ced0d6" stroke="none"/></svg>
<div class="r" style="left:517.5px;top:59px;width:1px;height:15px;background:#383a3e;"></div>
<svg class="i" style="left:522.50px;top:60.00px;" width="11.0" height="11.0" viewBox="0 0 11 11"><path d="M4.4 1 A4.8 4.8 0 1 0 10 7.2 A4 4 0 0 1 4.4 1 Z" stroke="#ced0d6" stroke-width="1"/></svg>
<svg class="i" style="left:532.30px;top:69.10px;" width="3.0" height="3.0" viewBox="0 0 3 3"><path d="M3 0 V3 H0 Z" fill="#ced0d6" stroke="none"/></svg>
<div class="r" style="left:540px;top:59px;width:1px;height:15px;background:#383a3e;"></div>
<svg class="i" style="left:549.50px;top:61.00px;" width="7.0" height="10.0" viewBox="0 0 7 10"><rect x="0.8" y="0.8" width="5.4" height="8.4" rx="1" stroke="#ced0d6" stroke-width="1"/></svg>
<svg class="i" style="left:582.30px;top:63.30px;" width="8.0" height="6.0" viewBox="0 0 8 6"><path d="M1.6 1.8 L4 4.2 L6.4 1.8" stroke="#9da0a8" stroke-width="1"/></svg>
<svg class="i" style="left:599.50px;top:62.50px;" width="10.0" height="7.0" viewBox="0 0 10 7"><path d="M1 6.2 A4 4 0 0 1 9 6.2 Z M2.4 3.2 L1.4 1.2 M7.6 3.2 L8.6 1.2" stroke="#57b968" stroke-width="1"/></svg>
<svg class="i" style="left:625.30px;top:63.30px;" width="8.0" height="6.0" viewBox="0 0 8 6"><path d="M1.6 1.8 L4 4.2 L6.4 1.8" stroke="#9da0a8" stroke-width="1"/></svg>
<svg class="i" style="left:680.50px;top:62.00px;" width="6.0" height="8.0" viewBox="0 0 6 8"><path d="M1.8 1.4 L4.4 4 L1.8 6.6" stroke="#9da0a8" stroke-width="1"/></svg>
<svg class="i" style="left:702.50px;top:62.00px;" width="9.0" height="8.0" viewBox="0 0 9 8"><path d="M4.5 1 L8.3 7.2 H0.7 Z" fill="#f2c55c" stroke="#f2c55c" stroke-width="0.9"/><path d="M4.5 3 V5" stroke="#3a3220" stroke-width="1"/><circle cx="4.5" cy="6.3" r="0.55" fill="#3a3220" stroke="none"/></svg>
<svg class="i" style="left:724.30px;top:61.50px;" width="9.0" height="9.0" viewBox="0 0 9 9"><path d="M0.6 1.5 H8.4 M0.6 4.5 H8.4 M0.6 7.5 H8.4 M5.8 0.4 V2.6 M2.6 3.4 V5.6 M5.8 6.4 V8.6" stroke="#ced0d6" stroke-width="0.9"/></svg>
<svg class="i" style="left:382.50px;top:84.00px;" width="13.0" height="9.0" viewBox="0 0 13 9"><path d="M0.8 4.5 C2.6 1.4 10.4 1.4 12.2 4.5 C10.4 7.6 2.6 7.6 0.8 4.5 Z" stroke="#ced0d6" stroke-width="1"/><circle cx="6.5" cy="4.5" r="1.8" stroke="#ced0d6" stroke-width="1"/></svg>
<svg class="i" style="left:393.30px;top:92.10px;" width="3.0" height="3.0" viewBox="0 0 3 3"><path d="M3 0 V3 H0 Z" fill="#ced0d6" stroke="none"/></svg>
<svg class="i" style="left:401.00px;top:83.30px;" width="11.0" height="11.0" viewBox="0 0 11 11"><rect x="0.8" y="0.8" width="9.4" height="9.4" rx="0.8" stroke="#ced0d6" stroke-width="1"/><path d="M4 1 V10 M7 1 V10" stroke="#ced0d6" stroke-width="1"/></svg>
<div class="r" style="left:417.5px;top:81px;width:1px;height:15px;background:#383a3e;"></div>
<svg class="i" style="left:423.30px;top:85.80px;" width="10.0" height="6.0" viewBox="0 0 10 6"><path d="M1 3 H9 M2.8 1.2 L1 3 L2.8 4.8 M7.2 1.2 L9 3 L7.2 4.8" stroke="#5a5d63" stroke-width="0.9"/></svg>
<svg class="i" style="left:443.00px;top:83.80px;" width="6.0" height="10.0" viewBox="0 0 6 10"><path d="M3 1 V9 M1.2 2.8 L3 1 L4.8 2.8 M1.2 7.2 L3 9 L4.8 7.2" stroke="#5a5d63" stroke-width="0.9"/></svg>
<svg class="i" style="left:622.70px;top:164.00px;" width="4.0" height="12.0" viewBox="0 0 4 12"><g fill="#868a91" stroke="none"><circle cx="2" cy="3.4" r="0.6"/><circle cx="2" cy="6" r="0.6"/><circle cx="2" cy="8.6" r="0.6"/></g></svg>
<svg class="i" style="left:635.50px;top:485.50px;" width="14.0" height="12.0" viewBox="0 0 14 12"><path d="M1 11 L10.5 1.5 M6 11 L13 4" stroke="#4e5157" stroke-width="1"/></svg>
<svg class="i" style="left:695.50px;top:457.50px;" width="11.0" height="11.0" viewBox="0 0 11 11"><path d="M3.3 6.1 V2.7 a0.8 0.8 0 0 1 1.6 0 V1.7 a0.8 0.8 0 0 1 1.6 0 V2.3 a0.8 0.8 0 0 1 1.6 0 V3.3 a0.75 0.75 0 0 1 1.5 0 V7.4 C9.6 9.4 8.4 10.4 6.6 10.4 C5 10.4 4.2 9.8 3.3 8.5 L1.5 6 C2.1 5.1 3 5.3 3.3 6.1 Z" fill="#ced0d6" stroke="none"/><path d="M4.9 2.8 V5.4 M6.5 2 V5.2 M8.1 2.8 V5.4" stroke="#2b2d30" stroke-width="0.45"/></svg>
<svg class="i" style="left:696.00px;top:480.30px;" width="10.0" height="10.0" viewBox="0 0 10 10"><path d="M5 0.8 V9.2 M0.8 5 H9.2" stroke="#ced0d6" stroke-width="1"/></svg>
<div class="r" style="left:696.5px;top:502px;width:9px;height:1px;background:#ced0d6;"></div>
<svg class="i" style="left:695.50px;top:532.20px;" width="11.0" height="10.0" viewBox="0 0 11 10"><rect x="0.8" y="0.8" width="9.4" height="8.4" rx="1.2" stroke="#ced0d6" stroke-width="1"/><path d="M3 5.6 V7.2 H4.8 M8 4.4 V2.8 H6.2" stroke="#ced0d6" stroke-width="0.9"/></svg>
<svg class="i" style="left:962.80px;top:480.00px;" width="10.0" height="10.0" viewBox="0 0 10 10"><path d="M5 0.8 V9.2 M0.8 5 H9.2" stroke="#ced0d6" stroke-width="1"/></svg>
<div class="r" style="left:963.3px;top:502px;width:9px;height:1px;background:#5a5d63;"></div>
<svg class="i" style="left:962.30px;top:532.60px;" width="11.0" height="10.0" viewBox="0 0 11 10"><rect x="0.8" y="0.8" width="9.4" height="8.4" rx="1.2" stroke="#5a5d63" stroke-width="1"/><path d="M3 5.6 V7.2 H4.8 M8 4.4 V2.8 H6.2" stroke="#5a5d63" stroke-width="0.9"/></svg>
<svg class="i" style="left:744.88px;top:60.38px;" width="10.23" height="10.23" viewBox="0 0 11 11"><path d="M3.2 2.6 A4.2 4.2 0 1 0 7.8 2.6 M5.5 0.8 V5" stroke="#ced0d6" stroke-width="1"/></svg>
<svg class="i" style="left:761.72px;top:60.85px;" width="11.16" height="9.3" viewBox="0 0 12 10"><path d="M1 3.6 H3 L5.6 1.4 V8.6 L3 6.4 H1 Z" stroke="#ced0d6" stroke-width="0.9"/><path d="M7.4 3.2 A2.4 2.4 0 0 1 7.4 6.8 M8.8 1.6 A4.4 4.4 0 0 1 8.8 8.4" stroke="#ced0d6" stroke-width="0.9"/></svg>
<svg class="i" style="left:779.05px;top:60.85px;" width="9.3" height="9.3" viewBox="0 0 10 10"><path d="M1 3.6 H3 L5.6 1.4 V8.6 L3 6.4 H1 Z" stroke="#ced0d6" stroke-width="0.9"/><path d="M7.4 3.2 A2.4 2.4 0 0 1 7.4 6.8" stroke="#ced0d6" stroke-width="0.9"/></svg>
<div class="r" style="left:795.5px;top:58px;width:1px;height:15px;background:#383a3e;"></div>
<svg class="i" style="left:801.12px;top:60.38px;" width="11.16" height="10.23" viewBox="0 0 12 11"><rect x="1" y="1.4" width="5.4" height="8.4" rx="1" stroke="#ced0d6" stroke-width="1"/><path d="M8.4 1.2 C10.6 3 10.6 7.4 8.4 9.6" stroke="#548af7" stroke-width="1"/></svg>
<svg class="i" style="left:818.62px;top:60.38px;" width="11.16" height="10.23" viewBox="0 0 12 11"><rect x="5.6" y="1.4" width="5.4" height="8.4" rx="1" stroke="#ced0d6" stroke-width="1"/><path d="M3.6 1.2 C1.4 3 1.4 7.4 3.6 9.6" stroke="#548af7" stroke-width="1"/></svg>
<div class="r" style="left:835.7px;top:58px;width:1px;height:15px;background:#383a3e;"></div>
<svg class="i" style="left:842.58px;top:61.31px;" width="7.44" height="8.37" viewBox="0 0 8 9"><path d="M6.6 1.2 L1.4 4.5 L6.6 7.8 Z" stroke="#ced0d6" stroke-width="0.9"/></svg>
<svg class="i" style="left:859.32px;top:61.31px;" width="8.37" height="8.37" viewBox="0 0 9 9"><circle cx="4.5" cy="4.5" r="3.4" stroke="#ced0d6" stroke-width="1"/></svg>
<svg class="i" style="left:876.98px;top:61.78px;" width="7.44" height="7.44" viewBox="0 0 8 8"><rect x="1" y="1" width="6" height="6" rx="0.6" stroke="#ced0d6" stroke-width="1"/></svg>
<div class="r" style="left:891.6px;top:58px;width:1px;height:15px;background:#383a3e;"></div>
<svg class="i" style="left:897.22px;top:60.85px;" width="11.16" height="9.3" viewBox="0 0 12 10"><rect x="0.8" y="0.8" width="9" height="6.4" rx="0.8" stroke="#ced0d6" stroke-width="0.9"/><rect x="6" y="4.4" width="4.6" height="4.6" rx="0.6" fill="#2b2d30" stroke="#ced0d6" stroke-width="0.9"/></svg>
<div class="r" style="left:913.7px;top:58px;width:1px;height:15px;background:#383a3e;"></div>
<svg class="i" style="left:920.68px;top:60.38px;" width="10.23" height="10.23" viewBox="0 0 11 11"><rect x="1.2" y="0.8" width="6" height="9" rx="1" stroke="#ced0d6" stroke-width="0.9"/><circle cx="7.8" cy="7.8" r="2.2" fill="#2b2d30" stroke="#ced0d6" stroke-width="0.9"/></svg>
<div class="r" style="left:936px;top:58px;width:1px;height:15px;background:#383a3e;"></div>
<svg class="i" style="left:940.75px;top:60.85px;" width="12.09" height="9.3" viewBox="0 0 13 10"><path d="M1 3 A0.8 0.8 0 0 1 1.8 2.2 H3.6 L4.6 0.9 H8.4 L9.4 2.2 H11.2 A0.8 0.8 0 0 1 12 3 V8.4 A0.8 0.8 0 0 1 11.2 9.2 H1.8 A0.8 0.8 0 0 1 1 8.4 Z" stroke="#ced0d6" stroke-width="0.9"/><circle cx="6.5" cy="5.6" r="2" stroke="#ced0d6" stroke-width="0.9"/></svg>
<svg class="i" style="left:969.02px;top:60.85px;" width="11.16" height="9.3" viewBox="0 0 12 10"><rect x="0.8" y="0.8" width="8.4" height="6" rx="0.8" stroke="#ced0d6" stroke-width="0.9"/><circle cx="8" cy="6.4" r="2" fill="#2b2d30" stroke="#ced0d6" stroke-width="0.9"/><path d="M9.4 7.8 L11 9.4" stroke="#ced0d6" stroke-width="0.9"/></svg>
<svg class="i" style="left:743.96px;top:77.58px;" width="12.09" height="7.44" viewBox="0 0 13 8"><rect x="0.8" y="0.8" width="8" height="6.4" rx="1" stroke="#ced0d6" stroke-width="0.9"/><path d="M8.8 3 L12 1.4 V6.6 L8.8 5 Z" stroke="#ced0d6" stroke-width="0.9"/></svg>
<div class="r" style="left:762px;top:74px;width:1px;height:15px;background:#383a3e;"></div>
<svg class="i" style="left:767.85px;top:76.65px;" width="9.3" height="9.3" viewBox="0 0 10 10"><path d="M2 2.6 A3.9 3.9 0 1 1 1.1 5" stroke="#ced0d6" stroke-width="0.9"/><path d="M1.6 0.6 V2.9 H3.9" stroke="#ced0d6" stroke-width="0.9"/><circle cx="5" cy="5" r="0.8" fill="#ced0d6" stroke="none"/></svg>
<svg class="i" style="left:787.40px;top:75.30px;" width="4.0" height="12.0" viewBox="0 0 4 12"><g fill="#ced0d6" stroke="none"><circle cx="2" cy="3" r="0.7"/><circle cx="2" cy="6" r="0.7"/><circle cx="2" cy="9" r="0.7"/></g></svg>
<div class="r" style="left:738px;top:91px;width:250px;height:1px;background:#1e1f22;"></div>
<svg class="i" style="left:783.00px;top:96.30px;" width="6.0" height="7.0" viewBox="0 0 6 7"><path d="M3 0.4 L5.6 1.4 V3.6 C5.6 5.2 4.4 6.2 3 6.6 C1.6 6.2 0.4 5.2 0.4 3.6 V1.4 Z" fill="#4a454e" stroke="none"/></svg>
<svg class="i" style="left:794.00px;top:96.80px;" width="6.0" height="6.0" viewBox="0 0 6 6"><rect x="0.4" y="0.4" width="5.2" height="5.2" rx="0.8" fill="#4a454e" stroke="none"/><rect x="1.8" y="1.8" width="2.4" height="2.4" fill="#fef7ff" stroke="none"/></svg>
<svg class="i" style="left:930.50px;top:96.80px;" width="8.0" height="6.0" viewBox="0 0 8 6"><path d="M4 5.8 L0.3 1.6 A5.6 5.6 0 0 1 7.7 1.6 Z" fill="#4a454e" stroke="none"/></svg>
<svg class="i" style="left:939.30px;top:96.80px;" width="6.0" height="6.0" viewBox="0 0 6 6"><path d="M5.6 0.4 V5.6 H0.4 Z" fill="#4a454e" stroke="none"/></svg>
<svg class="i" style="left:949.00px;top:96.30px;" width="4.0" height="7.0" viewBox="0 0 4 7"><path d="M1.2 0.3 H2.8 V1 H3.7 V6.7 H0.3 V1 H1.2 Z" fill="#4a454e" stroke="none"/></svg>
<svg class="i" style="left:17.00px;top:566.80px;" width="7.0" height="7.0" viewBox="0 0 7 7"><rect x="1.2" y="1.2" width="4.6" height="4.6" rx="1.2" stroke="#548af7" stroke-width="1.1"/></svg>
<svg class="i" style="left:73.50px;top:566.80px;" width="7.0" height="7.0" viewBox="0 0 7 7"><rect x="1.2" y="1.2" width="4.6" height="4.6" rx="1.2" stroke="#548af7" stroke-width="1.1"/></svg>
<svg class="i" style="left:142.10px;top:566.80px;" width="7.0" height="7.0" viewBox="0 0 7 7"><rect x="1.2" y="1.2" width="4.6" height="4.6" rx="1.2" stroke="#548af7" stroke-width="1.1"/></svg>
<svg class="i" style="left:63.60px;top:566.30px;" width="6.0" height="8.0" viewBox="0 0 6 8"><path d="M1.8 1.7000000000000002 L4.1 4 L1.8 6.3" stroke="#868a91" stroke-width="1"/></svg>
<svg class="i" style="left:103.10px;top:566.30px;" width="6.0" height="8.0" viewBox="0 0 6 8"><path d="M1.8 1.7000000000000002 L4.1 4 L1.8 6.3" stroke="#868a91" stroke-width="1"/></svg>
<svg class="i" style="left:131.60px;top:566.30px;" width="6.0" height="8.0" viewBox="0 0 6 8"><path d="M1.8 1.7000000000000002 L4.1 4 L1.8 6.3" stroke="#868a91" stroke-width="1"/></svg>
<svg class="i" style="left:177.60px;top:566.30px;" width="6.0" height="8.0" viewBox="0 0 6 8"><path d="M1.8 1.7000000000000002 L4.1 4 L1.8 6.3" stroke="#868a91" stroke-width="1"/></svg>
<svg class="i" style="left:206.60px;top:566.30px;" width="6.0" height="8.0" viewBox="0 0 6 8"><path d="M1.8 1.7000000000000002 L4.1 4 L1.8 6.3" stroke="#868a91" stroke-width="1"/></svg>
<svg class="i" style="left:247.20px;top:566.30px;" width="6.0" height="8.0" viewBox="0 0 6 8"><path d="M1.8 1.7000000000000002 L4.1 4 L1.8 6.3" stroke="#868a91" stroke-width="1"/></svg>
<svg class="i" style="left:257.50px;top:566.30px;" width="11.0" height="8.0" viewBox="0 0 11 8"><path d="M3 1.5 L0.8 4 L3 6.5 M8 1.5 L10.2 4 L8 6.5 M6.4 0.8 L4.6 7.2" stroke="#c77d55" stroke-width="1.1"/></svg>
<svg class="i" style="left:922.00px;top:565.00px;" width="10.0" height="9.0" viewBox="0 0 10 9"><path d="M1 5.4 L6.6 1.2 L9 4.4 L3.4 8.4 Z M2.2 6.6 L1.4 8.2" stroke="#a8adb5" stroke-width="0.9" fill="#a8adb5"/></svg>
<svg class="i" style="left:995.50px;top:565.00px;" width="10.0" height="10.0" viewBox="0 0 10 10"><rect x="1" y="4.4" width="6" height="4.8" rx="1" stroke="#a8adb5" stroke-width="1"/><path d="M5.4 4.2 V2.8 A1.8 1.8 0 0 1 9 2.8 V3.6" stroke="#a8adb5" stroke-width="1"/></svg>
</div>
</body></html>
